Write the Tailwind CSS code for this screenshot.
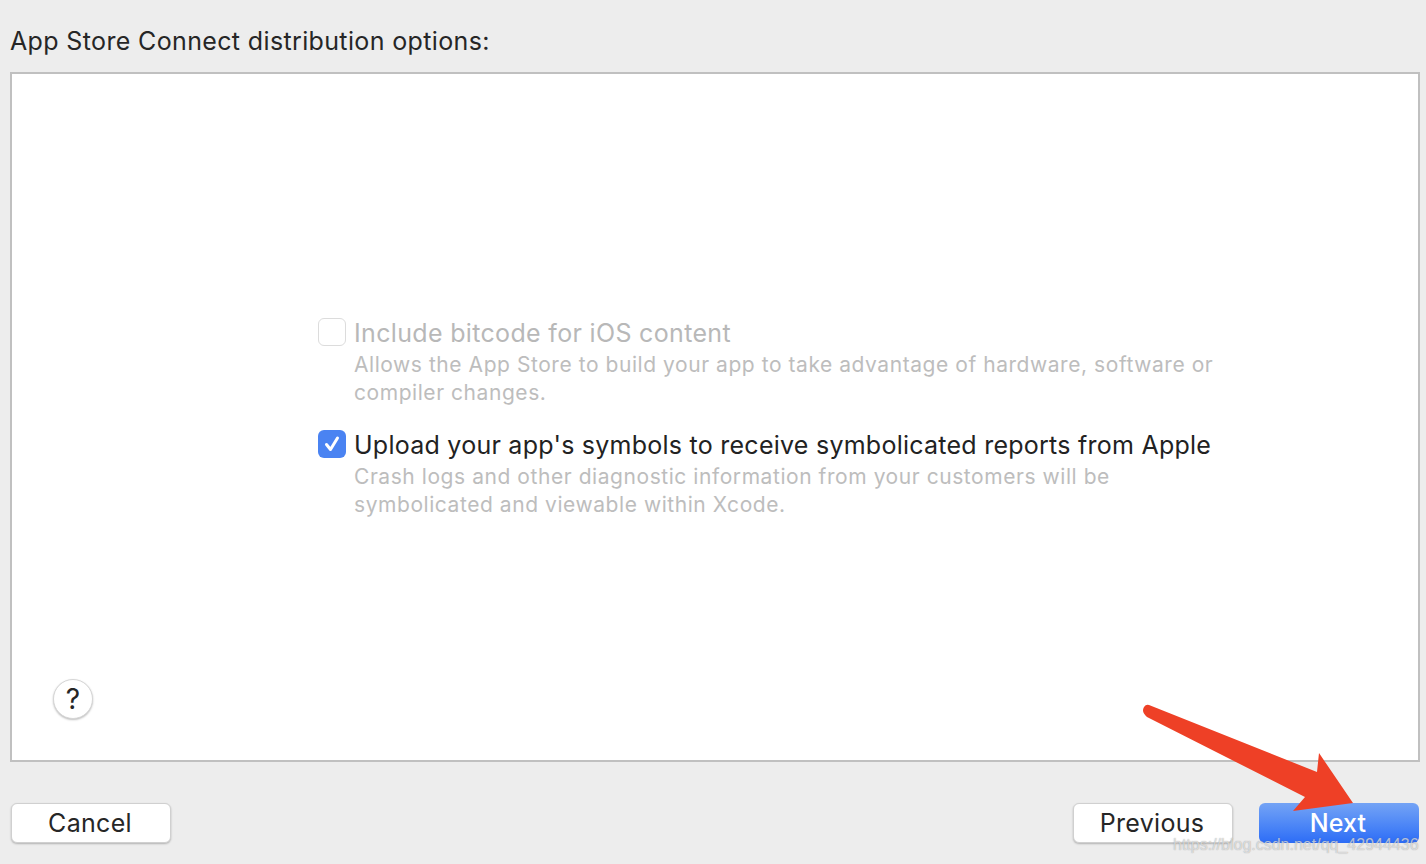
<!DOCTYPE html>
<html>
<head>
<meta charset="utf-8">
<script src="https://cdn.jsdelivr.net/npm/@tailwindcss/browser@4"></script>
</head>
<body class="m-0">
<div class="relative w-[1426px] h-[864px] overflow-hidden bg-[#ededed] font-['Inter','Liberation_Sans',sans-serif] flex flex-col">
  <h1 class="h-[72px] pl-[10px] pt-[25px] text-[25px] leading-[32px] tracking-[0.36px] font-normal text-[#262626]">App Store Connect distribution options:</h1>
  <main class="relative mx-[10px] h-[690px] w-[1410px] shrink-0 border-2 border-[#c0c0c0] bg-white">
    <div class="pt-[244px] pl-[306px] flex flex-col gap-[23px]">
      <div class="flex gap-[8px]">
        <div class="w-[28px] h-[28px] shrink-0 rounded-[6px] border border-[#dcdcdc] bg-white"></div>
        <div>
          <div class="text-[25px] leading-[30px] tracking-[0.33px] text-[#b8b8b8]">Include bitcode for iOS content</div>
          <div class="pt-[3px] text-[21px] leading-[28px] tracking-[0.555px] text-[#bdbdbd] w-[880px]">Allows the App Store to build your app to take advantage of hardware, software or compiler changes.</div>
        </div>
      </div>
      <div class="flex gap-[8px]">
        <div class="w-[28px] h-[28px] shrink-0 rounded-[6px] bg-[#4a83f2] flex items-center justify-center">
          <svg width="20" height="20" viewBox="0 0 20 20" fill="none"><path d="M4.5 10.5 L8.5 15.5 L15.5 4" stroke="#fff" stroke-width="3" stroke-linecap="round" stroke-linejoin="round"/></svg>
        </div>
        <div>
          <div class="text-[25px] leading-[30px] tracking-[0.25px] text-[#222222] whitespace-nowrap">Upload your app's symbols to receive symbolicated reports from Apple</div>
          <div class="pt-[3px] text-[21px] leading-[28px] tracking-[0.56px] text-[#bdbdbd] w-[800px]">Crash logs and other diagnostic information from your customers will be symbolicated and viewable within Xcode.</div>
        </div>
      </div>
    </div>
    <button class="absolute left-[41px] top-[605px] w-[40px] h-[40px] rounded-full bg-white border border-[#d6d6d6] shadow-[0_1px_2px_rgba(0,0,0,0.25)] text-[28px] leading-[36px] text-[#262626] text-center">?</button>
  </main>
  <footer class="flex items-start pt-[41px] pl-[11px] pr-[7px]">
    <button class="w-[160px] h-[40px] pr-[2px] rounded-[6px] bg-white border border-[#d0d0d0] shadow-[0_1px_2px_rgba(0,0,0,0.25)] text-[25px] leading-[36px] tracking-[0.3px] text-[#262626]">Cancel</button>
    <div class="ml-auto flex gap-[26px]">
      <button class="w-[160px] h-[40px] pr-[2px] rounded-[6px] bg-white border border-[#d0d0d0] shadow-[0_1px_2px_rgba(0,0,0,0.25)] text-[25px] leading-[36px] tracking-[0.3px] text-[#262626]">Previous</button>
      <button class="w-[160px] h-[40px] rounded-[6px] bg-gradient-to-b from-[#74a3f5] to-[#2c6cf6] text-[25px] leading-[40px] tracking-[0.1px] font-medium text-white pr-[2px]">Next</button>
    </div>
  </footer>
  <svg class="absolute left-0 top-0 pointer-events-none" width="1426" height="864" viewBox="0 0 1426 864" fill="none">
    <path d="M1149 705 L1317 772 L1319 753 L1353 803 L1293 811 L1305 797 L1147 717 Q1141 712 1144 707 Q1146 704 1149 705 Z" fill="#ee4026"/>
  </svg>
  <div class="absolute left-[1173px] top-[835px] text-[16px] leading-[20px] text-white/60 font-['Liberation_Sans',sans-serif] whitespace-nowrap [text-shadow:0_0_1px_rgba(90,90,90,0.6)]">https://blog.csdn.net/qq_42944436</div>
</div>
</body>
</html>
